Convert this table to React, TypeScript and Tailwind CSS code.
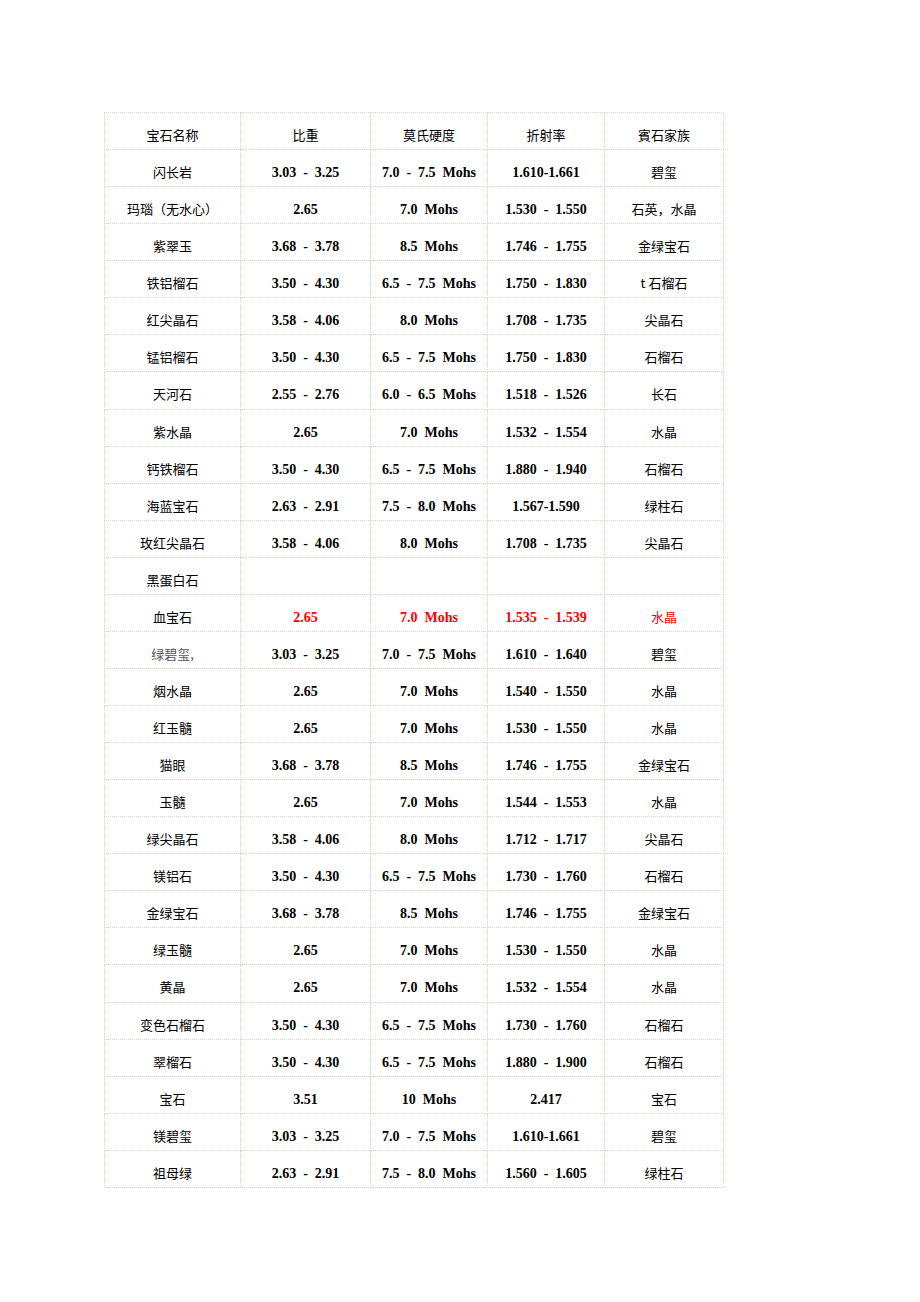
import React from "react";

type Row = {
	name: string;
	sg: string;
	hardness: string;
	ri: string;
	family: string;
	red?: boolean;
	grey?: boolean;
};

const ROWS: Row[] = [
	{ name: "闪长岩", sg: "3.03  -  3.25", hardness: "7.0  -  7.5  Mohs", ri: "1.610-1.661", family: "碧玺" },
	{ name: "玛瑙（无水心）", sg: "2.65", hardness: "7.0  Mohs", ri: "1.530  -  1.550", family: "石英，水晶" },
	{ name: "紫翠玉", sg: "3.68  -  3.78", hardness: "8.5  Mohs", ri: "1.746  -  1.755", family: "金绿宝石" },
	{ name: "铁铝榴石", sg: "3.50  -  4.30", hardness: "6.5  -  7.5  Mohs", ri: "1.750  -  1.830", family: "t 石榴石" },
	{ name: "红尖晶石", sg: "3.58  -  4.06", hardness: "8.0  Mohs", ri: "1.708  -  1.735", family: "尖晶石" },
	{ name: "锰铝榴石", sg: "3.50  -  4.30", hardness: "6.5  -  7.5  Mohs", ri: "1.750  -  1.830", family: "石榴石" },
	{ name: "天河石", sg: "2.55  -  2.76", hardness: "6.0  -  6.5  Mohs", ri: "1.518  -  1.526", family: "长石" },
	{ name: "紫水晶", sg: "2.65", hardness: "7.0  Mohs", ri: "1.532  -  1.554", family: "水晶" },
	{ name: "钙铁榴石", sg: "3.50  -  4.30", hardness: "6.5  -  7.5  Mohs", ri: "1.880  -  1.940", family: "石榴石" },
	{ name: "海蓝宝石", sg: "2.63  -  2.91", hardness: "7.5  -  8.0  Mohs", ri: "1.567-1.590", family: "绿柱石" },
	{ name: "玫红尖晶石", sg: "3.58  -  4.06", hardness: "8.0  Mohs", ri: "1.708  -  1.735", family: "尖晶石" },
	{ name: "黑蛋白石", sg: "", hardness: "", ri: "", family: "" },
	{ name: "血宝石", sg: "2.65", hardness: "7.0  Mohs", ri: "1.535  -  1.539", family: "水晶", red: true },
	{ name: "绿碧玺,", sg: "3.03  -  3.25", hardness: "7.0  -  7.5  Mohs", ri: "1.610  -  1.640", family: "碧玺", grey: true },
	{ name: "烟水晶", sg: "2.65", hardness: "7.0  Mohs", ri: "1.540  -  1.550", family: "水晶" },
	{ name: "红玉髓", sg: "2.65", hardness: "7.0  Mohs", ri: "1.530  -  1.550", family: "水晶" },
	{ name: "猫眼", sg: "3.68  -  3.78", hardness: "8.5  Mohs", ri: "1.746  -  1.755", family: "金绿宝石" },
	{ name: "玉髓", sg: "2.65", hardness: "7.0  Mohs", ri: "1.544  -  1.553", family: "水晶" },
	{ name: "绿尖晶石", sg: "3.58  -  4.06", hardness: "8.0  Mohs", ri: "1.712  -  1.717", family: "尖晶石" },
	{ name: "镁铝石", sg: "3.50  -  4.30", hardness: "6.5  -  7.5  Mohs", ri: "1.730  -  1.760", family: "石榴石" },
	{ name: "金绿宝石", sg: "3.68  -  3.78", hardness: "8.5  Mohs", ri: "1.746  -  1.755", family: "金绿宝石" },
	{ name: "绿玉髓", sg: "2.65", hardness: "7.0  Mohs", ri: "1.530  -  1.550", family: "水晶" },
	{ name: "黄晶", sg: "2.65", hardness: "7.0  Mohs", ri: "1.532  -  1.554", family: "水晶" },
	{ name: "变色石榴石", sg: "3.50  -  4.30", hardness: "6.5  -  7.5  Mohs", ri: "1.730  -  1.760", family: "石榴石" },
	{ name: "翠榴石", sg: "3.50  -  4.30", hardness: "6.5  -  7.5  Mohs", ri: "1.880  -  1.900", family: "石榴石" },
	{ name: "宝石", sg: "3.51", hardness: "10  Mohs", ri: "2.417", family: "宝石" },
	{ name: "镁碧玺", sg: "3.03  -  3.25", hardness: "7.0  -  7.5  Mohs", ri: "1.610-1.661", family: "碧玺" },
	{ name: "祖母绿", sg: "2.63  -  2.91", hardness: "7.5  -  8.0  Mohs", ri: "1.560  -  1.605", family: "绿柱石" },
];

const HEADERS = ["宝石名称", "比重", "莫氏硬度", "折射率", "賓石家族"];

// dotted, faintly tinted cell borders like the source document
const cell = "h-[37.07px] p-0 align-top text-center border border-dotted border-[#dcd5c3] leading-[20px]";
const cjk = "pt-[12px] font-['Noto_Sans_CJK_SC','Noto_Sans',sans-serif] text-[13px]";
const num = "pt-[13px] font-['Liberation_Serif',serif] font-bold text-[14px] whitespace-pre";

export default function App() {
	return (
		<div className="min-h-[1302px] w-[920px] bg-white pt-[112px] pl-[104px]">
			<table className="w-[619px] table-fixed border-collapse">
				<colgroup>
					<col className="w-[136px]" />
					<col className="w-[130px]" />
					<col className="w-[117px]" />
					<col className="w-[117px]" />
					<col className="w-[119px]" />
				</colgroup>
				<thead>
					<tr>
						{HEADERS.map((h) => (
							<th key={h} className={`${cell} ${cjk} pt-[11px] font-normal text-black`}>
								{h}
							</th>
						))}
					</tr>
				</thead>
				<tbody>
					{ROWS.map((r, i) => {
						const color = r.red ? "text-[#ff0000]" : "text-black";
						return (
							<tr key={i}>
								<td className={`${cell} ${cjk} ${r.grey ? "text-[#555555]" : "text-black"}`}>{r.name}</td>
								<td className={`${cell} ${num} ${color}`}>{r.sg}</td>
								<td className={`${cell} ${num} ${color}`}>{r.hardness}</td>
								<td className={`${cell} ${num} ${color}`}>{r.ri}</td>
								<td className={`${cell} ${cjk} ${color}`}>{r.family}</td>
							</tr>
						);
					})}
				</tbody>
			</table>
		</div>
	);
}
